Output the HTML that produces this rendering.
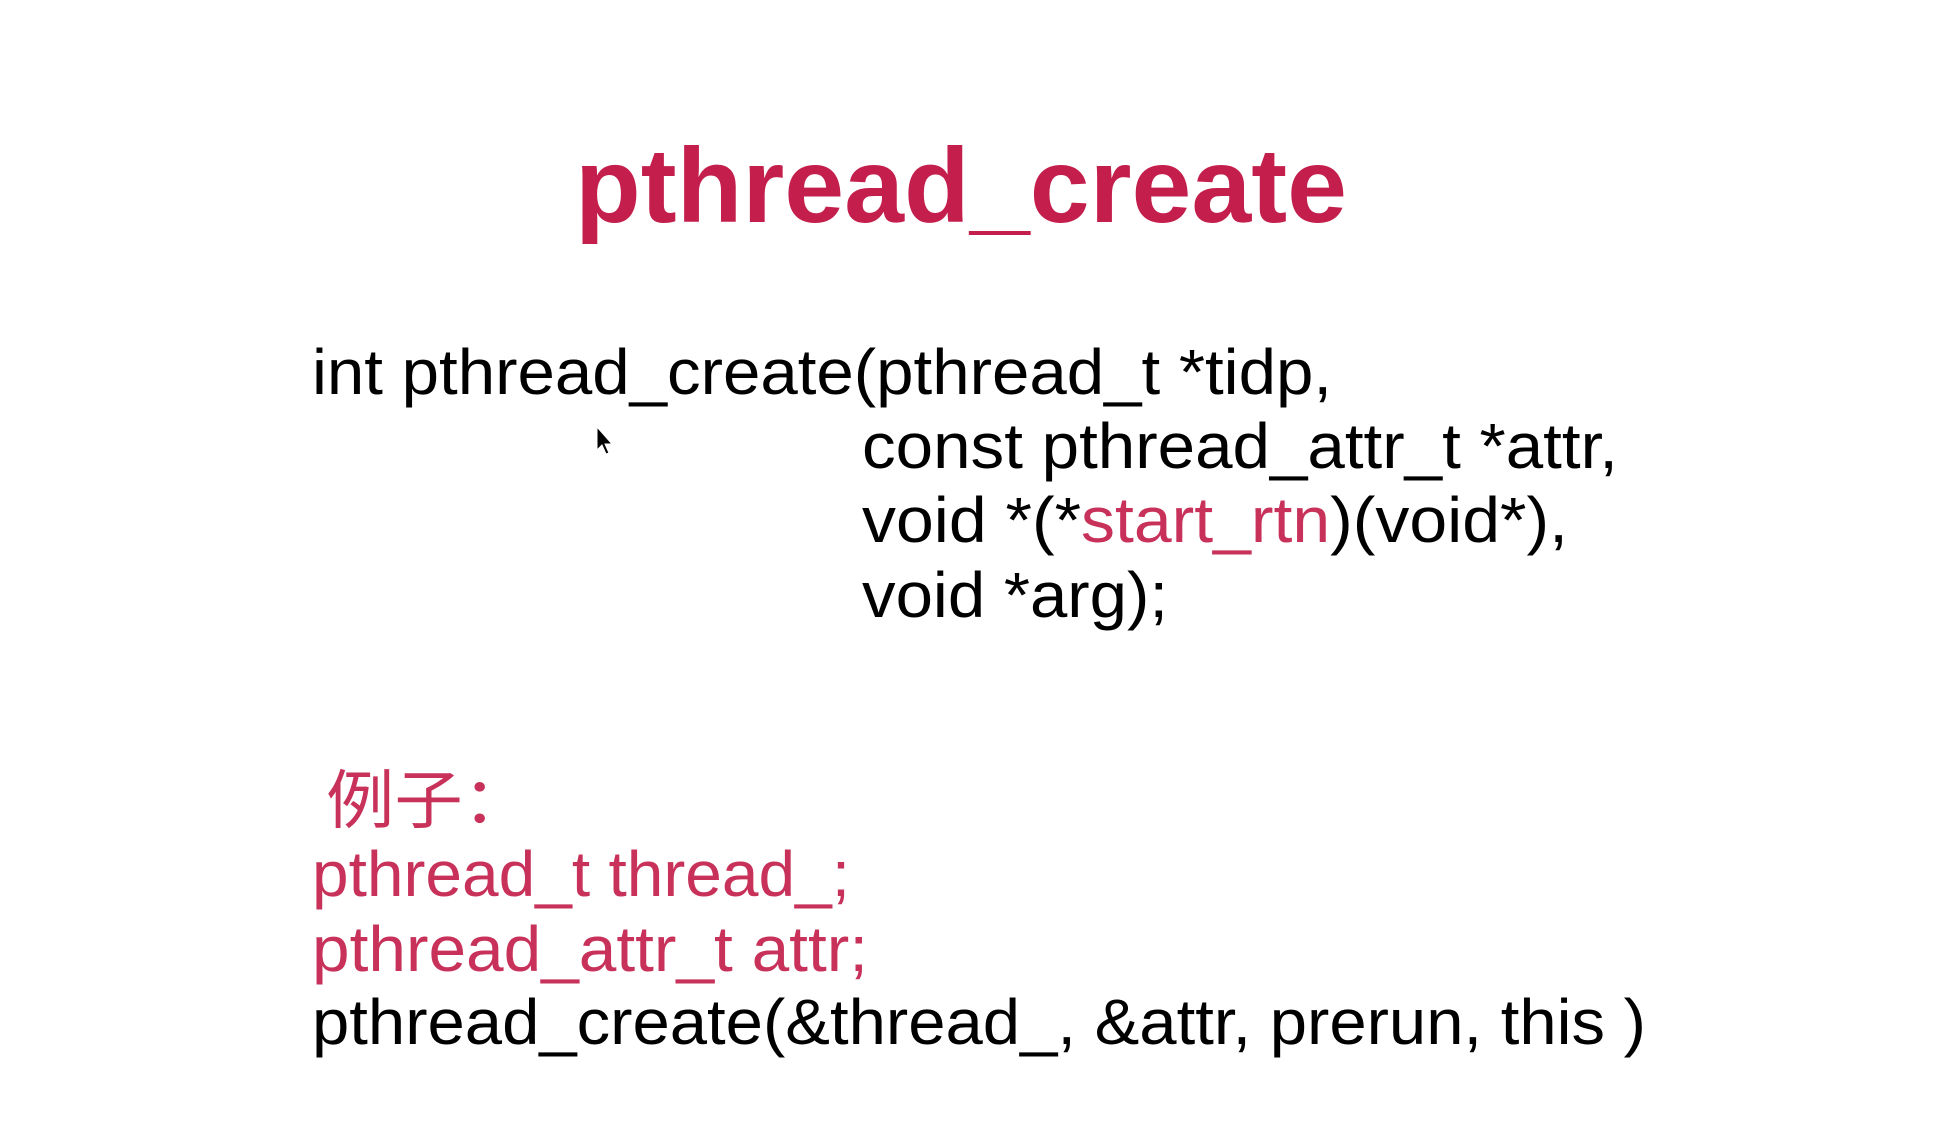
<!DOCTYPE html>
<html><head><meta charset="utf-8"><style>
html,body{margin:0;padding:0;background:#fff;}
svg{display:block}
text{font-family:"Liberation Sans","Noto Sans CJK SC",sans-serif;}
</style></head><body>
<svg width="1950" height="1142" viewBox="0 0 1950 1142" xmlns="http://www.w3.org/2000/svg">
<rect width="1950" height="1142" fill="#fff"/>
<text x="575" y="222" font-size="106" font-weight="bold" fill="#c41e4c" textLength="772" lengthAdjust="spacingAndGlyphs">pthread_create</text>
<g font-size="64" fill="#000">
<text x="312" y="394" textLength="1020" lengthAdjust="spacingAndGlyphs">int pthread_create(pthread_t *tidp,</text>
<text x="862" y="468" textLength="756" lengthAdjust="spacingAndGlyphs">const pthread_attr_t *attr,</text>
<text x="862" y="542" textLength="706" lengthAdjust="spacingAndGlyphs">void *(*<tspan fill="#c8325a">start_rtn</tspan>)(void*),</text>
<text x="862" y="617" textLength="306" lengthAdjust="spacingAndGlyphs">void *arg);</text>
<text x="326" y="823" fill="#c8325a" textLength="205" lengthAdjust="spacingAndGlyphs">例子：</text>
<text x="312" y="896" fill="#c8325a" textLength="538" lengthAdjust="spacingAndGlyphs">pthread_t thread_;</text>
<text x="312" y="971" fill="#c8325a" textLength="556" lengthAdjust="spacingAndGlyphs">pthread_attr_t attr;</text>
<text x="312" y="1044" textLength="1334" lengthAdjust="spacingAndGlyphs">pthread_create(&amp;thread_, &amp;attr, prerun, this )</text>
</g>
<path d="M597 427 L597 450 L602 445 L606 454 L609 453 L605 444 L612 444 Z" fill="#000" stroke="#fff" stroke-width="1"/>
</svg>
</body></html>
